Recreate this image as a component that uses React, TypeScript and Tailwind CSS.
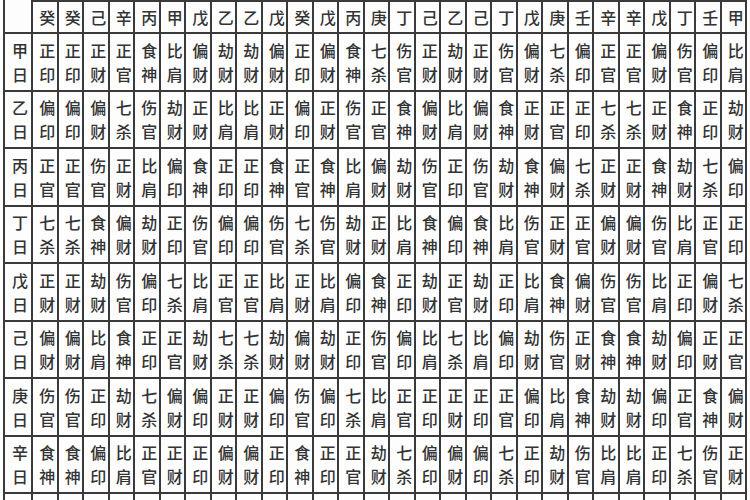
const stems = "甲乙丙丁戊己庚辛壬癸";

const gods = [
  ["比肩", "劫财"],
  ["食神", "伤官"],
  ["偏财", "正财"],
  ["七杀", "正官"],
  ["偏印", "正印"],
];

// ten-god relation of `other` seen from the day stem
function god(day: string, other: string) {
  const a = stems.indexOf(day);
  const b = stems.indexOf(other);
  const rel = (Math.floor(b / 2) - Math.floor(a / 2) + 5) % 5;
  return gods[rel][a % 2 === b % 2 ? 0 : 1];
}

const header = "癸癸己辛丙甲戊乙乙戊癸戊丙庚丁己乙己丁戊庚壬辛辛戊丁壬甲".split("");
const days = "甲乙丙丁戊己庚辛".split("");

const line = "border-[#3a3a3a]";

export default function App() {
  return (
    <div className="h-[500px] w-[750px] overflow-hidden bg-[#fdfdfd] pl-[3px] font-['Noto_Sans_CJK_SC',sans-serif] text-[16px] font-medium text-[#333333]">
      <div className="grid grid-cols-[30px_repeat(28,25.5px)] grid-rows-[34px] auto-rows-[57.5px]">
        <div className={`border-b-2 border-l-2 border-r-2 ${line}`} />
        {header.map((s, i) => (
          <div
            key={"h" + i}
            className={`flex items-center justify-center border-b-2 border-r-2 border-t-2 pl-[5px] leading-none ${line}`}
          >
            {s}
          </div>
        ))}
        {days.map((d) => (
          <div key={d} className="contents">
            <div
              className={`flex flex-col items-center justify-center border-b-2 border-l-2 border-r-2 pl-[4px] leading-[24px] ${line}`}
            >
              <span>{d}</span>
              <span>日</span>
            </div>
            {header.map((s, i) => {
              const g = god(d, s);
              return (
                <div
                  key={d + i}
                  className={`flex flex-col items-center justify-center border-b-2 border-r-2 pl-[5px] leading-[24px] ${line}`}
                >
                  <span>{g[0]}</span>
                  <span>{g[1]}</span>
                </div>
              );
            })}
          </div>
        ))}
        {/* next row, cut off by the bottom edge */}
        <div className={`border-b-2 border-l-2 border-r-2 ${line}`} />
        {header.map((s, i) => (
          <div key={"z" + i} className={`border-b-2 border-r-2 ${line}`} />
        ))}
      </div>
    </div>
  );
}
